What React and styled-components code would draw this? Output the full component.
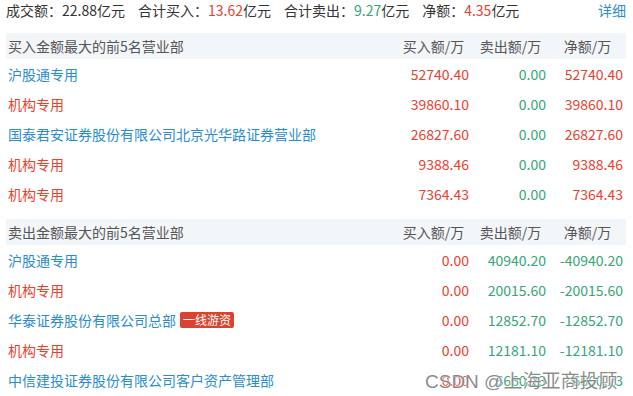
import React from 'react';
import styled, { createGlobalStyle } from 'styled-components';

const RED = '#e8412f';
const GREEN = '#35a675';
const BLUE = '#2a8ccf';

const GlobalStyle = createGlobalStyle`
  body {
    margin: 0;
    background: #fff;
    font-family: "Noto Sans CJK SC", "Noto Sans", sans-serif;
    color: #333;
  }
`;

const Page = styled.div`
  position: relative;
  width: 633px;
  height: 396px;
  overflow: hidden;
  padding: 0 7px 0 6px;
  box-sizing: border-box;
`;

const Summary = styled.div`
  display: flex;
  align-items: center;
  height: 20px;
  font-size: 14px;
  margin-bottom: 13px;
`;

const Stat = styled.span`
  margin-right: 13px;
  white-space: nowrap;
`;

const Value = styled.span`
  color: ${(p) => p.color || '#333'};
`;

const Detail = styled.a`
  margin-left: auto;
  color: ${BLUE};
  text-decoration: none;
`;

const Section = styled.section`
  margin-bottom: 10px;
`;

const Grid = styled.div`
  display: grid;
  grid-template-columns: 1fr 77px 77px 77px;
  align-items: center;
  height: ${(p) => (p.head ? 26 : 30)}px;
  font-size: 14px;
  background: ${(p) => (p.head ? '#f3f6f9' : 'transparent')};
  color: ${(p) => (p.head ? '#555' : '#333')};
`;

const Name = styled.span`
  padding-left: 2px;
  color: ${(p) => p.color || '#555'};
  white-space: nowrap;
  display: flex;
  align-items: center;
`;

const ColHead = styled.span`
  text-align: center;
  white-space: nowrap;
`;

const Num = styled.span`
  text-align: right;
  padding-right: 3px;
  color: ${(p) => p.color};
`;

const Badge = styled.span`
  margin-left: 4px;
  padding: 0 3px;
  height: 16px;
  line-height: 16px;
  font-size: 12px;
  color: #fff;
  background: #d9432f;
  border-radius: 2px;
`;

const Watermark = styled.div`
  position: absolute;
  left: 425px;
  top: 366px;
  font-size: 19px;
  color: rgba(100, 100, 100, 0.75);
  text-shadow: 0 0 2px #fff, 0 0 2px #fff;
  white-space: nowrap;
  font-family: "Liberation Sans", "Noto Sans CJK SC", sans-serif;
`;

const buyRows = [
  { name: '沪股通专用', link: true, buy: '52740.40', sell: '0.00', net: '52740.40' },
  { name: '机构专用', buy: '39860.10', sell: '0.00', net: '39860.10' },
  { name: '国泰君安证券股份有限公司北京光华路证券营业部', link: true, buy: '26827.60', sell: '0.00', net: '26827.60' },
  { name: '机构专用', buy: '9388.46', sell: '0.00', net: '9388.46' },
  { name: '机构专用', buy: '7364.43', sell: '0.00', net: '7364.43' },
];

const sellRows = [
  { name: '沪股通专用', link: true, buy: '0.00', sell: '40940.20', net: '-40940.20' },
  { name: '机构专用', buy: '0.00', sell: '20015.60', net: '-20015.60' },
  { name: '华泰证券股份有限公司总部', link: true, badge: '一线游资', buy: '0.00', sell: '12852.70', net: '-12852.70' },
  { name: '机构专用', buy: '0.00', sell: '12181.10', net: '-12181.10' },
  { name: '中信建投证券股份有限公司客户资产管理部', link: true, buy: '0.00', sell: '6660.23', net: '-6660.23' },
];

const netColor = (v) => (v.startsWith('-') ? GREEN : RED);

const Table = ({ title, rows }) => (
  <Section>
    <Grid head>
      <Name>{title}</Name>
      <ColHead>买入额/万</ColHead>
      <ColHead>卖出额/万</ColHead>
      <ColHead>净额/万</ColHead>
    </Grid>
    {rows.map((r, i) => (
      <Grid key={i}>
        <Name color={r.link ? BLUE : RED}>
          {r.name}
          {r.badge && <Badge>{r.badge}</Badge>}
        </Name>
        <Num color={RED}>{r.buy}</Num>
        <Num color={GREEN}>{r.sell}</Num>
        <Num color={netColor(r.net)}>{r.net}</Num>
      </Grid>
    ))}
  </Section>
);

export default function App() {
  return (
    <Page>
      <GlobalStyle />
      <Summary>
        <Stat>成交额：<Value>22.88</Value>亿元</Stat>
        <Stat>合计买入：<Value color={RED}>13.62</Value>亿元</Stat>
        <Stat>合计卖出：<Value color={GREEN}>9.27</Value>亿元</Stat>
        <Stat>净额：<Value color={RED}>4.35</Value>亿元</Stat>
        <Detail href="#">详细</Detail>
      </Summary>
      <Table title="买入金额最大的前5名营业部" rows={buyRows} />
      <Table title="卖出金额最大的前5名营业部" rows={sellRows} />
      <Watermark>CSDN @上海亚商投顾</Watermark>
    </Page>
  );
}
